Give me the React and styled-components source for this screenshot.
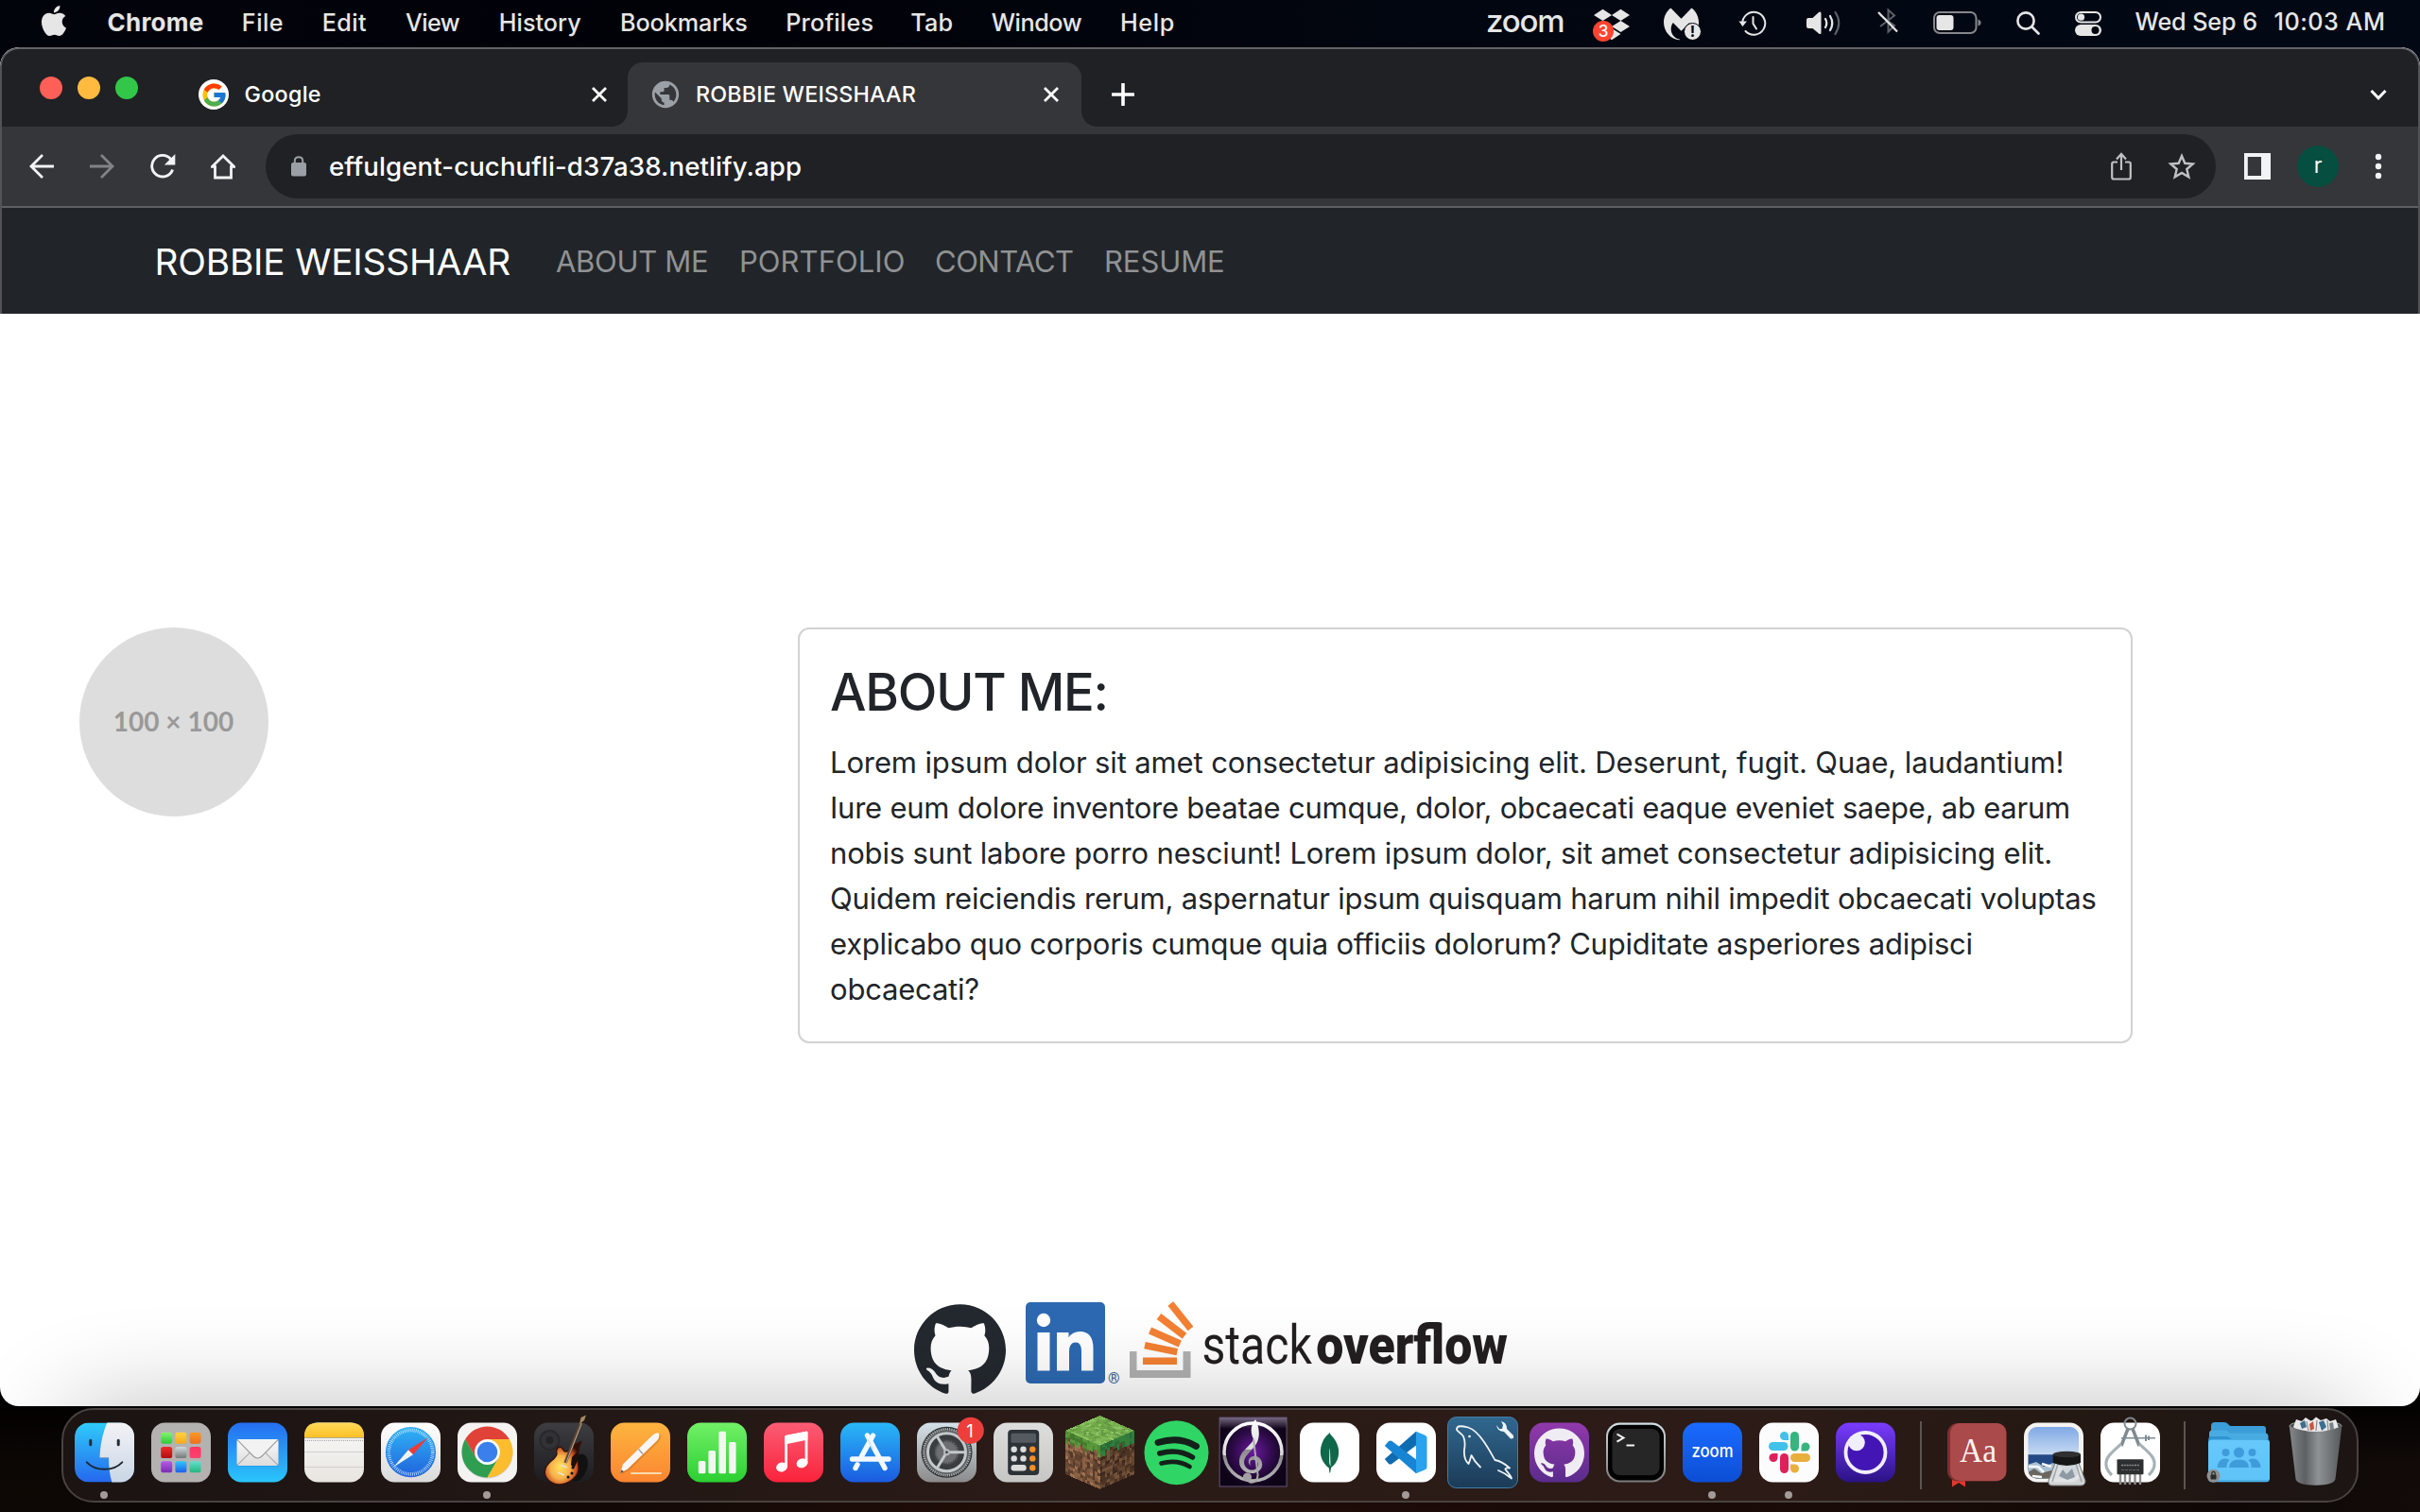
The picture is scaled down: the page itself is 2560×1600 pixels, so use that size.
import React from "react";
import styled, { createGlobalStyle } from "styled-components";
import { SiDropbox, SiMalwarebytes, SiMongodb, SiGithub, SiApple } from "react-icons/si";
import { MdPublic } from "react-icons/md";
import { FcGoogle } from "react-icons/fc";

const GlobalStyle = createGlobalStyle`
  * { box-sizing: border-box; }
  html, body { margin: 0; padding: 0; }
  body { background: #050303; overflow: hidden; font-family: Inter, "Liberation Sans", sans-serif; }
  svg { display: block; flex: none; }
`;

const Desktop = styled.div`
  display: flex;
  flex-direction: column;
  width: 2560px;
  height: 1600px;
  background:
    linear-gradient(90deg, #02040c 0%, #010208 30%, #020610 60%, #020915 100%) top / 100% 80px no-repeat,
    linear-gradient(180deg, rgba(0, 0, 0, 0.85) 1490px, rgba(0, 0, 0, 0.35) 1550px, rgba(0, 0, 0, 0.3) 1600px),
    linear-gradient(90deg, #140c08 0%, #170d09 20%, #35160e 42%, #2c110b 60%, #28120b 80%, #170d0a 92%, #1c110e 100%);
`;

/* ---------- menu bar ---------- */

const MenuBar = styled.header`
  display: flex;
  height: 50px;
  color: #e6e6e6;
  font-size: 25.2px;
  font-weight: 500;
`;

const AppleSlot = styled.div`
  width: 113.6px;
  padding: 6px 0 0 41px;
`;

const MenuItem = styled.div`
  width: ${(p) => p.$w}px;
  padding-top: 9px;
  line-height: 30px;
  white-space: nowrap;
  letter-spacing: ${(p) => p.$ls || 0}px;
  font-weight: ${(p) => (p.$bold ? 700 : 500)};
  font-size: ${(p) => (p.$bold ? 26 : 25.2)}px;
`;

const Status = styled.div`
  display: flex;
  margin-left: auto;
`;

const StatusSlot = styled.div`
  position: relative;
  width: ${(p) => p.$w}px;
  padding-top: ${(p) => p.$t}px;
`;

const ZoomWord = styled.div`
  width: 114px;
  font-size: 33px;
  line-height: 30px;
  padding-top: 7px;
  letter-spacing: -1.2px;
  font-weight: 500;
`;

const CountBadge = styled.span`
  position: absolute;
  left: -1px;
  top: 22px;
  width: 22px;
  height: 22px;
  border-radius: 50%;
  background: #ff4430;
  color: #fff;
  font-size: 17px;
  line-height: 22px;
  text-align: center;
`;

const AlertBadge = styled.span`
  position: absolute;
  left: 21px;
  top: 24px;
  width: 19px;
  height: 19px;
  border-radius: 50%;
  background: #e6e6e6;
  border: 1px solid #02060f;
  color: #02060f;
  font-size: 16px;
  font-weight: 700;
  line-height: 17px;
  text-align: center;
`;

const Clock = styled.div`
  display: flex;
  width: 301.5px;
  padding-top: 8px;
  line-height: 30px;
  white-space: nowrap;
`;

const ClockPart = styled.span`
  width: ${(p) => p.$w}px;
  letter-spacing: ${(p) => p.$ls}px;
`;

/* ---------- browser window ---------- */

const BrowserWindow = styled.main`
  display: flex;
  flex-direction: column;
  height: 1438px;
  border-radius: 20px;
  overflow: hidden;
  background: #fff;
`;

const DarkFrame = styled.div`
  height: 282px;
  background: #202124;
  border: 2px solid #626366;
  border-bottom: 0;
  border-left-color: #515357;
  border-right-color: #515357;
  border-radius: 20px 20px 0 0;
`;

const TabStrip = styled.div`
  display: flex;
  height: 82px;
  color: #fff;
`;

const TrafficLights = styled.div`
  display: flex;
  gap: 16px;
  width: 208px;
  padding: 29px 0 0 40px;
`;

const Light = styled.i`
  width: 24px;
  height: 24px;
  border-radius: 50%;
  background: ${(p) => p.$c};
`;

const Tab = styled.div`
  position: relative;
  display: flex;
  align-items: center;
  height: 68px;
  margin-top: 14px;
  width: ${(p) => p.$w}px;
  padding-left: ${(p) => p.$pl}px;
  background: ${(p) => (p.$active ? "#35363a" : "transparent")};
  border-radius: 16px 16px 0 0;
  &::before,
  &::after {
    content: "";
    display: ${(p) => (p.$active ? "block" : "none")};
    position: absolute;
    bottom: 0;
    width: 16px;
    height: 16px;
  }
  &::before { left: -16px; background: radial-gradient(circle at 0 0, transparent 15.5px, #35363a 16px); }
  &::after { right: -16px; background: radial-gradient(circle at 100% 0, transparent 15.5px, #35363a 16px); }
`;

const Favicon = styled.span`
  display: flex;
  align-items: center;
  justify-content: center;
  width: 32px;
  height: 32px;
  border-radius: 50%;
  background: ${(p) => p.$bg || "transparent"};
`;

const TabTitle = styled.span`
  flex: 1;
  font-size: 23.3px;
  font-weight: 500;
  line-height: 30px;
  padding-left: ${(p) => p.$pl}px;
  letter-spacing: ${(p) => p.$ls}px;
`;

const TabClose = styled.span`
  margin-right: ${(p) => p.$mr}px;
`;

const NewTab = styled.div`
  padding: 36px 0 0 32px;
`;

const TabSearch = styled.div`
  margin-left: auto;
  padding: 42px 33px 0 0;
`;

const Toolbar = styled.div`
  display: flex;
  align-items: center;
  height: 86px;
  padding-left: 29px;
  background: #35363a;
  border-bottom: 2px solid #5e6063;
`;

const ToolSlot = styled.div`
  width: ${(p) => p.$w}px;
`;

const Omnibox = styled.div`
  display: flex;
  align-items: center;
  width: 2063px;
  height: 68px;
  padding-left: 27px;
  border-radius: 34px;
  background: #202124;
  color: #fff;
`;

const Url = styled.span`
  flex: 1;
  padding-left: 24px;
  font-size: 27.6px;
  font-weight: 500;
  letter-spacing: 0.1px;
`;

const Avatar = styled.div`
  width: 44px;
  height: 44px;
  border-radius: 50%;
  background: #064e40;
  color: #fff;
  font-size: 23px;
  line-height: 42px;
  text-align: center;
`;

/* ---------- site ---------- */

const SiteNav = styled.nav`
  display: flex;
  height: 112px;
  background: #212529;
  padding-left: 161.5px;
`;

const Brand = styled.a`
  width: 424.5px;
  color: #fff;
  font-size: 38.8px;
  line-height: 60px;
  padding-top: 27px;
  letter-spacing: -0.2px;
  white-space: nowrap;
`;

const NavLink = styled.a`
  width: ${(p) => p.$w}px;
  color: #909294;
  font-size: 31px;
  line-height: 48px;
  padding-top: 33px;
  letter-spacing: ${(p) => p.$ls}px;
  white-space: nowrap;
`;

const SiteBody = styled.section`
  display: flex;
  flex: 1;
  align-items: flex-start;
  padding: 332px 0 0 84px;
`;

const Portrait = styled.div`
  display: flex;
  align-items: center;
  justify-content: center;
  width: 200px;
  height: 200px;
  margin-right: 560px;
  border-radius: 50%;
  background: #ddd;
  color: #999;
  font: 700 28px Lato, sans-serif;
  padding: 0 1px 2px 0;
`;

const Card = styled.article`
  width: 1412px;
  height: 440px;
  padding: 32px 0 0 32px;
  border: 2px solid #d2d2d2;
  border-radius: 12px;
  color: #212529;
`;

const CardTitle = styled.h1`
  margin: 0 0 17px;
  font-size: 54.3px;
  font-weight: 500;
  line-height: 68px;
  letter-spacing: -1.2px;
`;

const CardLine = styled.div`
  font-size: 31px;
  line-height: 48px;
  white-space: nowrap;
  letter-spacing: ${(p) => p.$ls}px;
`;

const SiteFooter = styled.footer`
  display: flex;
  height: 111px;
  padding-left: 967px;
`;

const FooterMark = styled.a`
  width: ${(p) => p.$w}px;
  padding-top: ${(p) => p.$t || 0}px;
`;

/* ---------- dock ---------- */

const DockArea = styled.footer`
  position: relative;
  padding: 2px 65px 0;
`;

const Dock = styled.div`
  display: flex;
  height: 100px;
  padding-left: 2.5px;
  border: 2px solid #484240;
  border-radius: 34px;
  background: linear-gradient(90deg, #1b1412 0%, #211715 20%, #2b1b17 45%, #2c1b16 75%, #241813 88%, #1c1514 100%);
  box-shadow: 0 0 110px -8px rgba(0, 0, 0, 0.32);
`;

const DockItem = styled.div`
  display: flex;
  flex-direction: column;
  align-items: center;
  gap: 2px;
  width: 81px;
  svg { overflow: visible; }
`;

const RunningDot = styled.i`
  width: 8px;
  height: 8px;
  border-radius: 50%;
  background: #a39b98;
`;

const DockRule = styled.div`
  width: ${(p) => p.$w}px;
  padding-top: 12px;
  &::after {
    content: "";
    display: block;
    width: 2px;
    height: 72px;
    margin: 0 auto;
    background: #5d5452;
  }
`;

const Tile = ({ fill }) => <rect x="9" y="13.5" width="63" height="63" rx="14.5" fill={fill} />;

const Grad = ({ id, from, to }) => (
  <linearGradient id={id} x1="0" y1="0" x2="0" y2="1">
    <stop offset="0" stopColor={from} />
    <stop offset="1" stopColor={to} />
  </linearGradient>
);

const Finder = () => (
  <>
    <defs>
      <Grad id="fi1" from="#2fcbfa" to="#2568ee" />
      <Grad id="fi2" from="#f4f3f6" to="#c9d6e6" />
      <clipPath id="fic"><rect x="9" y="13.5" width="63" height="63" rx="14.5" /></clipPath>
    </defs>
    <g clipPath="url(#fic)">
      <Tile fill="url(#fi1)" />
      <path d="M43.5 13C38 26 36 38 35.5 50.3H45C45 60 46 69 48.5 77H73V13Z" fill="url(#fi2)" />
      <path d="M35.5 50.6H45" stroke="#8fa3b8" strokeWidth="1" />
    </g>
    <path d="M25.8 32.3v4.4M55.2 32.3v4.4" stroke="#222d38" strokeWidth="3" strokeLinecap="round" />
    <path d="M21.8 55.3C31 65.3 50 65.3 59.3 55.3" fill="none" stroke="#1b2733" strokeWidth="1.9" strokeLinecap="round" />
  </>
);

const launchColors = [
  ["#86f46c", "#2fc93a"], ["#ffd23f", "#f8a81c"], ["#f79a26", "#ee6f1f"],
  ["#ee2b2b", "#ae0f12"], ["#cfdadd", "#777"], ["#ff3462", "#f8456e"],
  ["#b35be6", "#7a2cb5"], ["#2fc6fb", "#1e5fe8"], ["#62e0cf", "#27b47e"],
];
const Launchpad = () => (
  <>
    <defs>{launchColors.map((c, i) => <Grad key={i} id={`lp${i}`} from={c[0]} to={c[1]} />)}</defs>
    <Tile fill="#b4b2b1" />
    {launchColors.map((c, i) => (
      <rect key={i} x={19.2 + (i % 3) * 15.2} y={23.7 + Math.floor(i / 3) * 15.3} width="12" height="12" rx="2.6" fill={`url(#lp${i})`} />
    ))}
  </>
);

const Mail = () => (
  <>
    <defs><Grad id="ml" from="#256ef0" to="#2ac6fb" /><Grad id="ml2" from="#fafafa" to="#dcdcdc" /></defs>
    <Tile fill="url(#ml)" />
    <rect x="18.5" y="31.6" width="44" height="28" rx="2" fill="#155aa0" opacity=".35" />
    <rect x="18.5" y="31" width="44" height="28" rx="2" fill="url(#ml2)" />
    <path d="M19 58.4L33 44.6M62 58.4L48 44.6" stroke="#8e8e8e" strokeWidth="1" />
    <path d="M19 31.6L35.5 48.5Q40.5 53.5 45.5 48.5L62 31.6" fill="#f2f2f2" stroke="#9b9b9b" strokeWidth="1.1" />
  </>
);

const Notes = () => (
  <>
    <defs><Grad id="nt" from="#fdd95a" to="#fdc226" /><Grad id="nt2" from="#fafaf9" to="#e8e5df" /></defs>
    <Tile fill="url(#nt2)" />
    <path d="M9 29V28Q9 13.5 23.5 13.5H57.5Q72 13.5 72 28V29Z" fill="url(#nt)" />
    <path d="M9 29.5H72" stroke="#b3a98d" strokeWidth="1" />
    <path d="M10 32.3H71" stroke="#aaa" strokeWidth="1.3" strokeDasharray="1 1" />
    <path d="M9 44.5H72M9 60.5H72" stroke="#cfcfcf" strokeWidth="1.2" />
  </>
);

const Safari = () => (
  <>
    <defs><Grad id="sf" from="#2fb3f5" to="#2062dd" /><Grad id="sf2" from="#fff" to="#dadada" /></defs>
    <Tile fill="url(#sf2)" />
    <circle cx="40.5" cy="44.7" r="26.6" fill="url(#sf)" />
    <circle cx="40.5" cy="44.7" r="23.2" fill="none" stroke="#d7edfb" strokeWidth="3.6" strokeDasharray=".7 1.3" />
    <path d="M58.7 29.3L38 42.3L43 47.3Z" fill="#ee3b36" />
    <path d="M22.3 60.5L38 42.3L43 47.3Z" fill="#f3f3f3" />
  </>
);

const Chrome = () => (
  <>
    <Tile fill="#f4f3f2" />
    <g transform="translate(40.5 44.5)">
      <circle r="27" cy="1" fill="#999" opacity=".4" />
      <path d="M-23.38 -13.5A27 27 0 0 1 23.38 -13.5H0L-11.69 6.75Z" fill="#e14238" />
      <path d="M-23.38 -13.5L-11.69 6.75L11.69 6.75L0 27A27 27 0 0 1 -23.38 -13.5Z" fill="#2f9e50" />
      <path d="M23.38 -13.5H0L11.69 6.75L0 27A27 27 0 0 0 23.38 -13.5Z" fill="#fbbd2e" />
      <circle r="13.4" fill="#fff" />
      <circle r="10.7" fill="#3a7fec" />
    </g>
  </>
);

const GarageBand = () => (
  <>
    <defs>
      <Grad id="gb" from="#3d3d42" to="#1c1c1f" />
      <radialGradient id="gb2" cx=".42" cy=".6" r=".6">
        <stop offset="0" stopColor="#ffe25c" /><stop offset=".45" stopColor="#f8b04a" />
        <stop offset=".78" stopColor="#c1471f" /><stop offset="1" stopColor="#2c0d07" />
      </radialGradient>
    </defs>
    <Tile fill="url(#gb)" />
    <circle cx="25.5" cy="32" r="10" fill="#323236" stroke="#28282b" strokeWidth="2" />
    <circle cx="25.5" cy="32" r="4" fill="#242427" />
    <ellipse cx="56" cy="61" rx="9" ry="15" fill="#111" transform="rotate(20 56 61)" />
    <path d="M59 33C58 37 55 40 56 45C53 50 57 57 56 64C54 73 44 79 35 79C25 78 18 70 21 62C23 55 31 53 33 47C32 43 33 40 36 39C40 39 39 44 42 44C46 44 49 42 50 38C52 34 56 37 59 33Z" fill="url(#gb2)" stroke="#33120a" strokeWidth="1.4" />
    <path d="M49 50L55 44L56 52L51 62L48 58Z" fill="#1c100c" />
    <path d="M42 56L58.5 14" stroke="#5f4737" strokeWidth="3.4" />
    <path d="M42.8 56L59.3 14" stroke="#d6c3a4" strokeWidth=".8" />
    <path d="M57 15L58.5 8L64 5.500L62 11Z" fill="#a58a5f" />
    <path d="M37 58L44 61M34 66L41 69" stroke="#e8e2d4" strokeWidth="1.600" />
    <circle cx="49" cy="67" r="1.5" fill="#111" /><circle cx="45" cy="71" r="1.500" fill="#111" /><circle cx="50" cy="61" r="1.500" fill="#111" />
  </>
);

const Pages = () => (
  <>
    <defs><Grad id="pg" from="#fdb53f" to="#fb8530" /></defs>
    <Tile fill="url(#pg)" />
    <path d="M31 67H62" stroke="#fdd9ad" strokeWidth="2" strokeLinecap="round" />
    <path d="M19 67L22.5 58L53 28Q58 23 60.5 25.5Q61.5 28 58 33L27.5 62.5Z" fill="#b85f16" opacity=".35" transform="translate(1.5 1)" />
    <path d="M19 67L22 57.5L53 27Q58 23 60 25Q61.5 28 58 32.5L27 62.5Z" fill="#f7f6f5" />
    <path d="M38.5 41.5L43 46.5" stroke="#9b9b9b" strokeWidth="1.2" />
    <path d="M19 67L20.5 63.2L23 65.2Z" fill="#555" />
  </>
);

const Numbers = () => (
  <>
    <defs><Grad id="nb" from="#72f067" to="#2bcf32" /></defs>
    <Tile fill="url(#nb)" />
    {[[24.6, 54], [35.2, 43], [46.2, 22.7], [56.8, 34]].map(([x, y]) => (
      <rect key={x} x={x - 3.8} y={y} width="7.6" height={67.3 - y} rx="1.5" fill="#f3f7f2" />
    ))}
  </>
);

const Music = () => (
  <>
    <defs><Grad id="ms" from="#fb5c74" to="#fa233b" /></defs>
    <Tile fill="url(#ms)" />
    <path d="M32.6 61V28.5L54 24V56.5" fill="none" stroke="#fff" strokeWidth="2.8" strokeLinejoin="round" />
    <path d="M31.2 28Q31.2 27 32.5 26.8L54 22.8Q55.4 22.7 55.4 24V31.5L31.2 36.5Z" fill="#fff" />
    <ellipse cx="28" cy="60.5" rx="6" ry="4.9" fill="#fff" transform="rotate(-18 28 60.5)" />
    <ellipse cx="49.5" cy="56.3" rx="6" ry="4.9" fill="#fff" transform="rotate(-18 49.5 56.3)" />
  </>
);

const AppStore = () => (
  <>
    <defs><Grad id="as" from="#29b8f7" to="#1b5be0" /></defs>
    <Tile fill="url(#as)" />
    <g stroke="#f3f8fd" strokeWidth="5.4" strokeLinecap="round">
      <path d="M43.5 27L31.5 49" /><path d="M27 57.8L25 61.5" />
      <path d="M37.5 27L56 61.5" /><path d="M21.5 52H60" />
    </g>
    <path d="M38.3 31.5L43.5 41.5" stroke="#a9d3f5" strokeWidth=".7" />
  </>
);

const Settings = () => (
  <>
    <defs><Grad id="st" from="#d5e2e9" to="#8b8b8b" /></defs>
    <Tile fill="url(#st)" />
    <circle cx="40.5" cy="44.7" r="27" fill="#2e3133" />
    <circle cx="40.5" cy="44.7" r="24.5" fill="#5d6062" stroke="#a8adb0" strokeWidth="2.6" strokeDasharray="1.3 1" />
    <circle cx="40.5" cy="44.7" r="20" fill="#3a3d40" stroke="#c3c8cb" strokeWidth="3" />
    <circle cx="40.5" cy="44.7" r="12.5" fill="#6c6e70" stroke="#47494b" strokeWidth="3" strokeDasharray="1.5 1.2" />
    <path d="M40.5 44.7L61 44.7M40.5 44.7L30 27.5M40.5 44.7L30 62" stroke="#c3c8cb" strokeWidth="3" />
    <circle cx="40.5" cy="44.7" r="3.5" fill="#b4b8ba" />
    <circle cx="40.5" cy="44.7" r="1.3" fill="#333" />
    <circle cx="65.8" cy="21.7" r="14" fill="#ee3e3b" />
    <text x="65" y="28.5" fontSize="18.5" fill="#fff" textAnchor="middle" fontFamily="Inter">1</text>
  </>
);

const Calculator = () => (
  <>
    <defs><Grad id="cc" from="#dedede" to="#c6c6c4" /></defs>
    <Tile fill="url(#cc)" />
    <rect x="24.2" y="21" width="33" height="48" rx="4" fill="#2d3238" />
    <rect x="27.5" y="24.7" width="26.5" height="10" rx="1.5" fill="#555a60" />
    {[41.7, 51.4, 61.3].map((y, r) =>
      [30.7, 40.5, 50.3].map((x, c) =>
        r === 2 && c < 2 ? null : <circle key={x + "-" + y} cx={x} cy={y} r="3.2" fill={c === 2 ? "#f88f20" : "#dcdcdc"} />
      )
    )}
    <rect x="27.5" y="58.1" width="16.2" height="6.4" rx="3.2" fill="#dcdcdc" />
  </>
);

const noise = (i, j, k) => {
  const v = Math.sin(i * 12.989 + j * 78.233 + k * 37.719) * 43758.545;
  return v - Math.floor(v);
};
const pick = (list, n) => list[Math.floor(n * list.length)];
const dirt = ["#8a6144", "#6d4a34", "#9d7150", "#55392a", "#7a553c", "#5f4130"];
const darkDirt = ["#63452f", "#4b3324", "#73523a", "#3d291d", "#553a29"];
const grass = ["#7fb757", "#6fa648", "#8bc463", "#649a42", "#77ae50"];
const N = 14;
const cells = Array.from({ length: N * N }, (_, n) => [n % N, Math.floor(n / N)]);
const GrassBlock = () => (
  <g shapeRendering="crispEdges">
    <g transform={`matrix(${36.5 / N} ${15.8 / N} ${-36.5 / N} ${15.8 / N} 40.5 6)`}>
      {cells.map(([x, y]) => <rect key={x + "." + y} x={x} y={y} width="1.05" height="1.05" fill={pick(grass, noise(x, y, 1))} />)}
    </g>
    <g transform={`matrix(${36.5 / N} ${15.8 / N} 0 ${46 / N} 4 21.8)`}>
      {cells.map(([x, y]) => (
        <rect key={x + "." + y} x={x} y={y} width="1.05" height="1.05" fill={y < 2 + Math.floor(noise(x, 3, 5) * 3) ? pick(["#4f8a34", "#437a2c", "#5b983d"], noise(x, y, 2)) : pick(dirt, noise(x, y, 3))} />
      ))}
    </g>
    <g transform={`matrix(${36.5 / N} ${-15.8 / N} 0 ${46 / N} 40.5 37.6)`}>
      {cells.map(([x, y]) => (
        <rect key={x + "." + y} x={x} y={y} width="1.05" height="1.05" fill={y < 2 + Math.floor(noise(x, 7, 5) * 3) ? pick(["#2f7a3e", "#286b35", "#357f3a"], noise(x, y, 4)) : pick(darkDirt, noise(x, y, 6))} />
      ))}
    </g>
  </g>
);

const Spotify = () => (
  <>
    <circle cx="40.5" cy="45.2" r="34" fill="#2fd565" />
    <g fill="none" stroke="#14201a" strokeLinecap="round">
      <path d="M21 34.5Q44 27.5 61.5 38.5" strokeWidth="6.8" />
      <path d="M22.8 46Q42 40.5 57.5 50" strokeWidth="5.5" />
      <path d="M24.5 56.5Q41 52 54.5 60" strokeWidth="4.7" />
    </g>
  </>
);

const Treble = () => (
  <>
    <defs>
      <radialGradient id="tr"><stop offset="0" stopColor="#6a1a9e" /><stop offset=".6" stopColor="#2c0a47" /><stop offset="1" stopColor="#0e0417" /></radialGradient>
      <linearGradient id="tr2" x1="0" y1="0" x2="0" y2="1"><stop offset="0" stopColor="#fff" /><stop offset=".55" stopColor="#d9d9d9" /><stop offset=".56" stopColor="#8a8a8a" /><stop offset="1" stopColor="#b5b5b5" /></linearGradient>
      <linearGradient id="tr3" x1="0" y1="0" x2="0" y2="1"><stop offset="0" stopColor="#a596b3" /><stop offset="1" stopColor="#a596b3" stopOpacity="0" /></linearGradient>
    </defs>
    <rect x="4.6" y="7.5" width="72" height="74" fill="url(#tr)" />
    <rect x="5.1" y="8" width="71" height="12" fill="url(#tr3)" opacity=".7" />
    <rect x="5.1" y="8" width="71" height="73" fill="none" stroke="#6d5a7b" strokeWidth="1" />
    <circle cx="40.5" cy="44.5" r="30.5" fill="none" stroke="url(#tr2)" strokeWidth="3.5" />
    <path d="M43 10C37 17 38 25 41 31C38 39 26 43 26 55C26 62 33 68 41 67C48 66 51 61 50 56C49 50 43 47 38 50C35 52 35 57 38 59C36 54 39 52 42 53C46 54 47 59 44 62C39 66 31 62 31 55C31 47 44 41 46 31C48 24 46 15 43 10Z" fill="url(#tr2)" />
    <path d="M41 31L45.5 68C46 75 41 78 36 76" fill="none" stroke="#a9a9a9" strokeWidth="2" />
    <circle cx="34.5" cy="71" r="4.6" fill="#a3a0a3" />
  </>
);

const Mongo = () => (
  <>
    <Tile fill="#fff" />
    <SiMongodb x="19" y="23.5" size="43" color="#10684a" />
  </>
);

const VsCode = () => (
  <>
    <Tile fill="#fff" />
    <path d="M51 22.7L17.8 52L22 57Q24 58 25.5 57L51 37.5Z" fill="#0f6cb0" />
    <path d="M51 67.3L17.8 38L22 33Q24 32 25.5 33L51 52.5Z" fill="#1785d3" />
    <path d="M51 22.7L61 27Q62.5 28 62.5 29.5V60.5Q62.5 62 61 63L51 67.3Z" fill="#2ba2ee" />
  </>
);

const Workbench = () => (
  <>
    <defs><Grad id="wb" from="#31688f" to="#1b3b57" /></defs>
    <rect x="3.5" y="7.5" width="74" height="75" rx="9" fill="url(#wb)" stroke="#417fa8" />
    <g fill="none" stroke="#eef4f8" strokeWidth="1.8" strokeLinejoin="round" strokeLinecap="round">
      <path d="M13 20.5C13 16 19 17 25 18.5C33 21 39 29 44 37C48 43 51 49 53.5 53C59 54 64 57 69 61.5C66 61 64 62 64.5 63C67 66 70 69 71 72.5C67 69 62 66 57 64" />
      <path d="M13 20.5C13 23 18 24 20 28C22 33 22 37 21 42C20.5 48 22 54 25.5 57C27 54 27.5 51 28.5 48C31 53 34 57 38 60.5" />
    </g>
    <circle cx="26.5" cy="28" r="1.3" fill="#fff" />
    <path d="M55 16L58 20H61L62 16L60 12Q66 13 66 20L73 27V30L70 30.5L63 23Q56 23 55 16Z" fill="#eef4f8" />
  </>
);

const GithubDesktop = () => (
  <>
    <defs><Grad id="gh" from="#9139ab" to="#5a2c8c" /></defs>
    <Tile fill="url(#gh)" />
    <SiGithub x="14" y="18.8" size="53" color="#f0ecf4" />
  </>
);

const Terminal = () => (
  <>
    <defs><Grad id="tm" from="#cfe1e6" to="#7d7b79" /></defs>
    <Tile fill="url(#tm)" />
    <rect x="11" y="15.8" width="59" height="58.6" rx="12.5" fill="#020202" />
    <rect x="15.5" y="20" width="50" height="49" rx="8" fill="#262626" />
    <path d="M20.5 25.5L27.5 29.6L20.5 33.7" fill="none" stroke="#f4f4f4" strokeWidth="2" />
    <path d="M30.5 37.5H39" stroke="#f4f4f4" strokeWidth="2" />
  </>
);

const Zoom = () => (
  <>
    <defs><Grad id="zm" from="#1a6bff" to="#0c4ed4" /></defs>
    <Tile fill="url(#zm)" />
    <text x="40.5" y="50" fontSize="18.5" fontWeight="500" fill="#fff" textAnchor="middle" textLength="44" lengthAdjust="spacingAndGlyphs" fontFamily="Inter">zoom</text>
  </>
);

const Slack = () => (
  <>
    <Tile fill="#fdfcfc" />
    <g fill="#42c2ea"><rect x="19" y="34" width="20.5" height="9" rx="4.5" /><path d="M40 32H35.5A4.5 4.5 0 1 1 40 27.5Z" /></g>
    <g fill="#37b57f"><rect x="42" y="23" width="9" height="20.5" rx="4.5" /><path d="M53.5 43.5V39A4.5 4.5 0 1 1 58 43.5Z" /></g>
    <g fill="#de205b"><rect x="31" y="46" width="9" height="21" rx="4.5" /><path d="M28.5 46V50.5A4.5 4.5 0 1 1 24 46Z" /></g>
    <g fill="#e9af3d"><rect x="42" y="46" width="21" height="9" rx="4.5" /><path d="M42 57.5H46.5A4.5 4.5 0 1 1 42 62Z" /></g>
  </>
);

const Eclipse = () => (
  <>
    <defs><Grad id="ec" from="#7a3cff" to="#2a1284" /></defs>
    <Tile fill="url(#ec)" />
    <circle cx="40.5" cy="45" r="21" fill="#4315b5" stroke="#f1eefb" strokeWidth="3.8" />
    <circle cx="31" cy="34.5" r="8.8" fill="#f1eefb" />
  </>
);

const Dictionary = () => (
  <>
    <path d="M14 72H28V81.5L21 77L14 81.5Z" fill="#e2382f" />
    <rect x="9" y="14" width="62" height="61.5" rx="11" fill="#7d2f30" />
    <rect x="12" y="14" width="59.5" height="61" rx="10" fill="#ab4a4b" />
    <text x="22" y="54.7" fontSize="35" fill="#fbf3f0" textLength="39" lengthAdjust="spacingAndGlyphs" fontFamily="'Liberation Serif', serif">Aa</text>
  </>
);

const Preview = () => (
  <>
    <defs>
      <Grad id="pv" from="#7fa9e6" to="#c9dbf2" />
      <clipPath id="pvc"><rect x="13.5" y="18" width="53.5" height="54.5" rx="9" /></clipPath>
    </defs>
    <Tile fill="#f4f3f1" />
    <g clipPath="url(#pvc)">
      <path d="M13 18H68V48H13Z" fill="url(#pv)" />
      <path d="M13 47.3H68V73H13Z" fill="#244a86" />
      <path d="M13 58L22 55L30 60L40 56L50 61V73H13Z" fill="#a9c0d2" />
      <path d="M13 66L20 62L27 67L38 64L44 70L34 73H13Z" fill="#6b665d" />
      <path d="M14 60L24 60L30 66M28 57L38 60M18 70L28 71" stroke="#f5f8fa" strokeWidth="2.5" fill="none" />
    </g>
    <path d="M42 56H67L74 75Q74 80 69 80H39Q34.5 80 35 75Z" fill="#dfe2e4" fillOpacity=".93" stroke="#77797b" />
    <path d="M45 57L39 76M64 57L70 76" stroke="#a4a7a9" strokeWidth="1.5" />
    <path d="M46 70L50 63L54 68L60 62L63 71L55 74Z" fill="#8d99a3" />
    <path d="M39.7 47Q54.5 41 69 47V56Q54.5 62 39.7 56Z" fill="#161616" />
    <ellipse cx="54.4" cy="47" rx="14.6" ry="3.2" fill="#303030" />
  </>
);

const SystemInfo = () => (
  <>
    <Tile fill="#fff" />
    <g fill="none" stroke="#7f8b91" strokeWidth="2">
      <circle cx="40.5" cy="14.5" r="6" />
      <path d="M38 20L31 38M43 20L50 38" strokeWidth="3.5" />
      <path d="M31 36C22 44 14 50 15 58C15 62 18 66 21 69" strokeWidth="3.2" stroke="#a7b2b7" />
      <path d="M50 36C59 44 67 50 66 58C66 62 63 66 60 69" strokeWidth="3.2" stroke="#a7b2b7" />
      <path d="M31 29.7H67" strokeWidth="1.5" /><path d="M57 26.5V33M60 27.5V32" />
    </g>
    <path d="M30 68V79M35 68V79M40 68V79M45.5 68V79M51 68V79" stroke="#8d8d8d" strokeWidth="2.4" />
    <rect x="26.5" y="52.2" width="28" height="16" rx="1" fill="#2d2e2f" />
    <path d="M31 58.5H50" stroke="#8e8e8e" strokeWidth="1.6" strokeDasharray="2 .8" />
    <path d="M31 63.5H50" stroke="#636363" strokeWidth="1" strokeDasharray="3 1" />
  </>
);

const SharedFolder = () => (
  <>
    <defs><Grad id="fd" from="#66c8fb" to="#5fc3f8" /></defs>
    <path d="M11 34V17Q11 13 15 13H25Q28 13 30 16L31.5 17H66Q69 17 69 20V40H11Z" fill="#3b9ed9" />
    <path d="M9 38V25Q9 21.5 12 21.5H27L31 24.5H68Q71.5 24.5 71.5 28V42H9Z" fill="#48abe2" />
    <path d="M8 40V33Q8 28 11 28H28L33 31H69.5Q73 31 73 34V44H8Z" fill="#2f95d2" />
    <rect x="8" y="31.5" width="65" height="44.8" rx="4" fill="url(#fd)" />
    <path d="M9 74.8H72" stroke="#3fa6df" strokeWidth="1.2" />
    <g fill="#3f9cdb">
      <circle cx="40.5" cy="45" r="5.5" /><path d="M30 61Q30 52.5 40.5 52.5Q51 52.5 51 61Z" />
      <circle cx="26.5" cy="45" r="4" /><path d="M17.5 61Q18 51.5 26.5 51.5Q29 51.5 30.5 53Q27 56 27.5 61Z" />
      <circle cx="54.5" cy="45" r="4" /><path d="M63.5 61Q63 51.5 54.5 51.5Q52 51.5 50.5 53Q54 56 53.5 61Z" />
    </g>
    <circle cx="13.5" cy="69.7" r="7" fill="#8e8f90" />
    <rect x="10.5" y="68.5" width="6" height="5" rx=".8" fill="#2b2b2b" />
    <path d="M11.8 69V67Q11.8 65.3 13.5 65.3Q15.2 65.3 15.2 67V69" fill="none" stroke="#2b2b2b" strokeWidth="1.2" />
  </>
);

const Trash = () => (
  <>
    <defs>
      <linearGradient id="ts"><stop offset="0" stopColor="#85888a" /><stop offset=".3" stopColor="#5d6062" /><stop offset=".55" stopColor="#8f9294" /><stop offset="1" stopColor="#56595b" /></linearGradient>
    </defs>
    <ellipse cx="40.5" cy="17" rx="27.5" ry="5.5" fill="#4a4c4e" stroke="#a5a7a9" strokeWidth="1" />
    <path d="M17 18L20 10L26 12L30 8L36 12L41 7.5L46 11L52 9L56 12L62 10L65 19L58 24H22Z" fill="#e9e9e9" />
    <path d="M24 14L29 11L31 18L26 20ZM44 13L49 11L52 18L47 22Z" fill="#3c6e8f" />
    <path d="M34 15L38 12L39 20L35 22Z" fill="#c7573f" /><path d="M55 14L59 13L60 20L56 22Z" fill="#7c8388" />
    <path d="M31 12L33 22M42 11L41 22M53 11L54 22" stroke="#8b8b8b" strokeWidth="1.2" />
    <path d="M12.8 17Q40.5 29 68.3 17L61.5 73Q60 79.7 40.5 79.7Q21 79.7 19.5 73Z" fill="url(#ts)" />
  </>
);

const apps = [
  [Finder, true], [Launchpad], [Mail], [Notes], [Safari], [Chrome, true], [GarageBand], [Pages], [Numbers], [Music],
  [AppStore], [Settings], [Calculator], [GrassBlock], [Spotify], [Treble], [Mongo], [VsCode, true], [Workbench],
  [GithubDesktop], [Terminal], [Zoom, true], [Slack, true], [Eclipse],
];
const renderDock = (list) =>
  list.map(([Icon, running], i) => (
    <DockItem key={i}>
      <svg width="81" height="84" viewBox="0 0 81 84"><Icon /></svg>
      {running && <RunningDot />}
    </DockItem>
  ));

const menus = [
  ["Chrome", 142.2, 0.2, true], ["File", 85, 0.5], ["Edit", 88.2, 0.37], ["View", 98.9, -0.6], ["History", 128.1, 0],
  ["Bookmarks", 175.3, -0.08], ["Profiles", 132, 0.2], ["Tab", 85.4, 0.2], ["Window", 136.3, -0.4], ["Help", 70, 0.6],
];

const paragraph = [
  ["Lorem ipsum dolor sit amet consectetur adipisicing elit. Deserunt, fugit. Quae, laudantium!", -0.125],
  ["Iure eum dolore inventore beatae cumque, dolor, obcaecati eaque eveniet saepe, ab earum", -0.235],
  ["nobis sunt labore porro nesciunt! Lorem ipsum dolor, sit amet consectetur adipisicing elit.", -0.145],
  ["Quidem reiciendis rerum, aspernatur ipsum quisquam harum nihil impedit obcaecati voluptas", -0.19],
  ["explicabo quo corporis cumque quia officiis dolorum? Cupiditate asperiores adipisci", -0.235],
  ["obcaecati?", -0.2],
];

const CloseGlyph = () => (
  <svg width="16" height="16" viewBox="0 0 16 16"><path d="M1 1L15 15M15 1L1 15" stroke="#fff" strokeWidth="2.8" /></svg>
);

export default function App() {
  return (
    <Desktop>
      <GlobalStyle />
      <MenuBar>
        <AppleSlot><SiApple size={32} color="#e6e6e6" /></AppleSlot>
        {menus.map(([label, w, ls, bold]) => <MenuItem key={label} $w={w} $ls={ls} $bold={bold}>{label}</MenuItem>)}
        <Status>
          <ZoomWord>zoom</ZoomWord>
          <StatusSlot $w={74} $t={7}><SiDropbox size={38} color="#e6e6e6" /><CountBadge>3</CountBadge></StatusSlot>
          <StatusSlot $w={79} $t={7}><SiMalwarebytes size={37} color="#e6e6e6" /><AlertBadge>!</AlertBadge></StatusSlot>
          <StatusSlot $w={72} $t={11}>
            <svg width="30" height="28" viewBox="0 0 30 28" fill="none" stroke="#e6e6e6" strokeWidth="2">
              <path d="M4.3 15A12 12 0 1 1 7.5 22" strokeLinecap="round" /><path d="M.5 11.5H9L4.5 17Z" fill="#e6e6e6" stroke="none" />
              <path d="M15.5 7V14L19 19.5" strokeLinecap="round" />
            </svg>
          </StatusSlot>
          <StatusSlot $w={75} $t={11}>
            <svg width="38" height="28" viewBox="0 0 38 28" fill="none" stroke="#e6e6e6" strokeWidth="2.2" strokeLinecap="round">
              <path d="M0 10Q0 8 2 8H6.5L13 2Q15.5 .5 15.5 3.5V23.5Q15.5 26 13 24.5L6.5 19H2Q0 19 0 17Z" fill="#e6e6e6" stroke="none" />
              <path d="M20 9Q22.5 13.5 20 18M25 6Q29.5 13.5 25 21" /><path d="M30.5 2Q38 13 30.5 25" stroke="#5d6067" />
            </svg>
          </StatusSlot>
          <StatusSlot $w={59} $t={8}>
            <svg width="24" height="28" viewBox="0 0 24 28" fill="none" strokeWidth="2">
              <path d="M3 8L18 19L11.5 25.5V2.5L18 8.5L3 20" stroke="#5d6067" /><path d="M1 5L21 25.5" stroke="#e6e6e6" strokeWidth="2.2" />
            </svg>
          </StatusSlot>
          <StatusSlot $w={88} $t={12}>
            <svg width="51" height="24" viewBox="0 0 51 24">
              <rect x="1" y="1" width="44.5" height="22" rx="6" fill="none" stroke="#85878c" strokeWidth="2" />
              <rect x="3.5" y="4" width="18" height="16" rx="3" fill="#e6e6e6" /><path d="M47.5 8.5Q50.5 9.5 50.5 12Q50.5 14.5 47.5 15.5Z" fill="#85878c" />
            </svg>
          </StatusSlot>
          <StatusSlot $w={62} $t={12}>
            <svg width="25" height="25" viewBox="0 0 25 25" fill="none" stroke="#e6e6e6" strokeWidth="2.6" strokeLinecap="round">
              <circle cx="10" cy="10" r="8.6" /><path d="M16.5 16.5L23.5 23.5" />
            </svg>
          </StatusSlot>
          <StatusSlot $w={63.5} $t={12}>
            <svg width="28" height="26" viewBox="0 0 28 26">
              <rect x="1" y="1" width="26" height="10.5" rx="5.2" fill="none" stroke="#e6e6e6" strokeWidth="2" /><circle cx="6.5" cy="6.2" r="3.6" fill="#e6e6e6" />
              <rect x="0" y="14" width="28" height="12" rx="6" fill="#e6e6e6" /><circle cx="21.5" cy="20" r="4" fill="#02060f" />
            </svg>
          </StatusSlot>
          <Clock><ClockPart $w={147} $ls={-0.1}>Wed Sep 6</ClockPart><ClockPart $w={150} $ls={0.5}>10:03 AM</ClockPart></Clock>
        </Status>
      </MenuBar>

      <BrowserWindow>
        <DarkFrame>
          <TabStrip>
            <TrafficLights><Light $c="#fe5f57" /><Light $c="#febb40" /><Light $c="#32c748" /></TrafficLights>
            <Tab $w={453.5} $pl={0}>
              <Favicon $bg="#fff"><FcGoogle size={29} /></Favicon>
              <TabTitle $pl={16.5} $ls={0.3}>Google</TabTitle>
              <TabClose $mr={21.5}><CloseGlyph /></TabClose>
            </Tab>
            <Tab $active $w={480.5} $pl={24}>
              <Favicon><MdPublic size={34} color="#9aa0a6" /></Favicon>
              <TabTitle $pl={16.5} $ls={0.2}>ROBBIE WEISSHAAR</TabTitle>
              <TabClose $mr={24.5}><CloseGlyph /></TabClose>
            </Tab>
            <NewTab><svg width="24" height="24" viewBox="0 0 24 24"><path d="M12 1V23M1 12H23" stroke="#fff" strokeWidth="3.6" strokeLinecap="round" /></svg></NewTab>
            <TabSearch><svg width="18" height="13" viewBox="0 0 18 13"><path d="M1.5 2L9 9.8L16.5 2" fill="none" stroke="#fff" strokeWidth="3" /></svg></TabSearch>
          </TabStrip>
          <Toolbar>
            <ToolSlot $w={64}><svg width="26" height="26" viewBox="0 0 26 26" fill="none" stroke="#f1f3f4" strokeWidth="2.8"><path d="M26 13H2M14 1L2 13L14 25" /></svg></ToolSlot>
            <ToolSlot $w={63}><svg width="26" height="26" viewBox="0 0 26 26" fill="none" stroke="#828386" strokeWidth="2.8"><path d="M0 13H24M12 1L24 13L12 25" /></svg></ToolSlot>
            <ToolSlot $w={64.5}>
              <svg width="28" height="26" viewBox="0 0 28 26"><path d="M22.7 5.5A11.3 11.3 0 1 0 24.6 16.5" fill="none" stroke="#f1f3f4" strokeWidth="2.9" /><path d="M27.3 0V11.5H15.8Z" fill="#f1f3f4" /></svg>
            </ToolSlot>
            <ToolSlot $w={58.5}><svg width="26" height="27" viewBox="0 0 26 27"><path d="M1.5 13.3L13 2L24.5 13.3H21.5V25H4.5V13.3Z" fill="none" stroke="#f1f3f4" strokeWidth="2.8" /></svg></ToolSlot>
            <Omnibox>
              <svg width="16" height="22" viewBox="0 0 16 22"><rect x="0" y="7" width="16" height="14.5" rx="2" fill="#9aa0a6" /><path d="M3.8 8V5Q3.8 1.2 8 1.2Q12.2 1.2 12.2 5V8" fill="none" stroke="#9aa0a6" strokeWidth="2" /></svg>
              <Url>effulgent-cuchufli-d37a38.netlify.app</Url>
              <ToolSlot $w={60}>
                <svg width="22" height="30" viewBox="0 0 22 30" fill="none" stroke="#c0c1c3" strokeWidth="2.2"><path d="M7 10.5H3Q1.2 10.5 1.2 12.5V26.5Q1.2 28.5 3 28.5H19Q20.8 28.5 20.8 26.5V12.5Q20.8 10.5 19 10.5H15" /><path d="M11 19V2.5M6 7.5L11 2L16 7.5" /></svg>
              </ToolSlot>
              <ToolSlot $w={51}>
                <svg width="30" height="29" viewBox="0 0 30 29"><path d="M15 3L18.3 10.8L26.7 11.5L20.3 17L22.3 25.3L15 20.9L7.7 25.3L9.7 17L3.3 11.5L11.7 10.8Z" fill="none" stroke="#c0c1c3" strokeWidth="2.4" /></svg>
              </ToolSlot>
            </Omnibox>
            <ToolSlot $w={86}>
              <svg width="58" height="28" viewBox="0 0 58 28"><path d="M30 0H58V28H30ZM33.8 4V24H48V4Z" fill="#f1f3f4" fillRule="evenodd" /></svg>
            </ToolSlot>
            <Avatar>r</Avatar>
            <svg width="84" height="28" viewBox="0 0 84 28" fill="#f1f3f4"><circle cx="42" cy="4" r="3.2" /><circle cx="42" cy="14" r="3.2" /><circle cx="42" cy="24" r="3.2" /></svg>
          </Toolbar>
          <SiteNav>
            <Brand>ROBBIE WEISSHAAR</Brand>
            <NavLink $w={194} $ls={-0.3}>ABOUT ME</NavLink>
            <NavLink $w={207} $ls={0.05}>PORTFOLIO</NavLink>
            <NavLink $w={179} $ls={-0.5}>CONTACT</NavLink>
            <NavLink $w={160} $ls={-0.1}>RESUME</NavLink>
          </SiteNav>
        </DarkFrame>

        <SiteBody>
          <Portrait>100 × 100</Portrait>
          <Card>
            <CardTitle>ABOUT ME:</CardTitle>
            {paragraph.map(([line, ls]) => <CardLine key={line} $ls={ls}>{line}</CardLine>)}
          </Card>
        </SiteBody>

        <SiteFooter>
          <FooterMark $w={118} $t={2}><SiGithub size={97} color="#24292f" /></FooterMark>
          <FooterMark $w={110}>
            <svg width="106" height="88" viewBox="0 0 106 88">
              <rect x="0" y="1" width="84" height="86" rx="5" fill="#2d69b2" />
              <circle cx="19" cy="20" r="7.2" fill="#fff" />
              <path d="M12.5 33H25.5V73.5H12.5ZM33 33H45.5V38.5Q49 32 57.5 32Q71.5 32 71.5 50V73.5H59V53Q59 43.5 53 43.5Q46 43.5 46 53V73.5H33Z" fill="#fff" />
              <text x="87" y="87" fontSize="16" fill="#3a5f8f" fontFamily="Roboto">®</text>
            </svg>
          </FooterMark>
          <FooterMark $w={440}>
            <svg width="430" height="90" viewBox="0 0 430 90">
              <path d="M0 53V81H64.5V53H56.5V73H7.5V53Z" fill="#b1b1b1" />
              <g stroke="#f48133" strokeWidth="7.5">
                <path d="M14 63.3H50" /><path d="M16 46.7L50.3 53.7" /><path d="M21.5 31L53.3 45" /><path d="M31 16L58 36.7" /><path d="M43.3 2.5L64.5 29" />
              </g>
              <g transform="scale(.85 1)" fill="#231f20" fontSize="57" fontFamily="Roboto">
                <text x="90" y="66.5" textLength="137" lengthAdjust="spacingAndGlyphs">stack</text>
                <text x="232" y="66.5" fontWeight="900" textLength="238.5" lengthAdjust="spacingAndGlyphs">overflow</text>
              </g>
            </svg>
          </FooterMark>
        </SiteFooter>
      </BrowserWindow>

      <DockArea>
        <Dock>
          {renderDock(apps)}
          <DockRule $w={37} />
          {renderDock([[Dictionary], [Preview], [SystemInfo]])}
          <DockRule $w={34} />
          {renderDock([[SharedFolder], [Trash]])}
        </Dock>
      </DockArea>
    </Desktop>
  );
}
